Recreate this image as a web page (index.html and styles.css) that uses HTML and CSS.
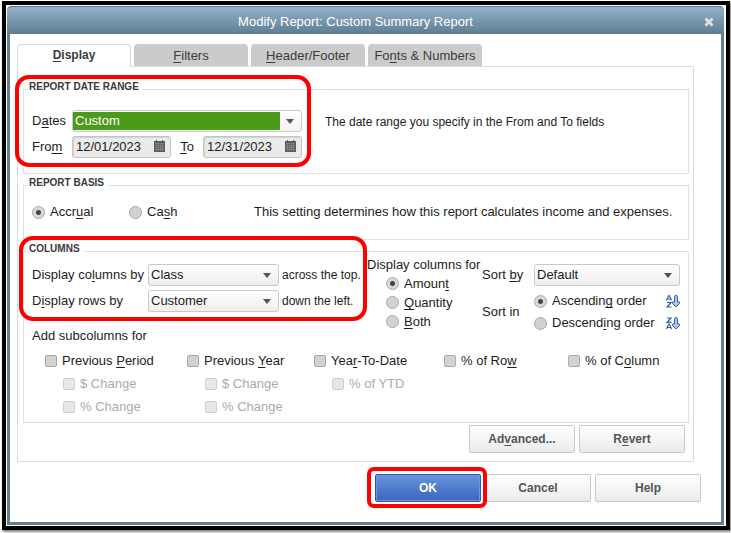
FILE: index.html
```html
<!DOCTYPE html>
<html lang="en">
<head>
<meta charset="UTF-8">
<meta name="viewport" content="width=device-width, initial-scale=1.0">
<title>Modify Report: Custom Summary Report</title>
<link rel="stylesheet" href="styles.css">
</head>
<body>
  <div class="frame">
    <div class="dialog">
      <div class="titlebar">
        <h1>Modify Report: Custom Summary Report</h1>
        <button class="close" aria-label="Close">
          <svg width="10" height="10" viewBox="0 0 10 10"><path d="M1.5 1.5l7 7M8.5 1.5l-7 7" stroke="#dfe1e3" stroke-width="2.8"/></svg>
        </button>
      </div>

      <form class="content">
        <div class="tabs">
          <button type="button" class="tab active"><u>D</u>isplay</button>
          <button type="button" class="tab"><u>F</u>ilters</button>
          <button type="button" class="tab"><u>H</u>eader/Footer</button>
          <button type="button" class="tab">Fo<u>n</u>ts &amp; Numbers</button>
        </div>

        <div class="panel">
          <fieldset class="date-range">
            <legend>REPORT DATE RANGE</legend>
            <div class="callout callout-dates"></div>
            <div class="split">
              <div class="dates">
                <label for="dates">D<u>a</u>tes</label>
                <div class="select select-focus">
                  <select id="dates"><option>Custom</option></select>
                </div>
                <label for="from">Fro<u>m</u></label>
                <div class="date-pair">
                  <div class="date">
                    <input type="text" id="from" value="12/01/2023">
                    <svg class="calendar" width="11" height="12" viewBox="0 0 11 12"><path d="M0 1h2V0h1v1h5V0h1v1h2v11H0z" fill="#5c5c5c"/><path d="M1 3.5h9M1 5.5h9M1 7.5h9M1 9.5h9M2.5 3v8M4.5 3v8M6.5 3v8M8.5 3v8" stroke="#8d8d8d" stroke-width=".6"/></svg>
                  </div>
                  <label for="to"><u>T</u>o</label>
                  <div class="date">
                    <input type="text" id="to" value="12/31/2023">
                    <svg class="calendar" width="11" height="12" viewBox="0 0 11 12"><path d="M0 1h2V0h1v1h5V0h1v1h2v11H0z" fill="#5c5c5c"/><path d="M1 3.5h9M1 5.5h9M1 7.5h9M1 9.5h9M2.5 3v8M4.5 3v8M6.5 3v8M8.5 3v8" stroke="#8d8d8d" stroke-width=".6"/></svg>
                  </div>
                </div>
              </div>
              <p class="hint">The date range you specify in the From and To fields</p>
            </div>
          </fieldset>

          <fieldset class="basis">
            <legend>REPORT BASIS</legend>
            <div class="basis-row">
              <label class="option"><input type="radio" name="basis" checked><span>Accr<u>u</u>al</span></label>
              <label class="option"><input type="radio" name="basis"><span>Ca<u>s</u>h</span></label>
              <p>This setting determines how this report calculates income and expenses.</p>
            </div>
          </fieldset>

          <fieldset class="columns">
            <legend>COLUMNS</legend>
            <div class="callout callout-columns"></div>
            <div class="columns-top">
              <div>
                <div class="display-by">
                  <label for="cols">Display co<u>l</u>umns by</label>
                  <div class="select"><select id="cols"><option>Class</option></select></div>
                  <span>across the top.</span>
                  <label for="rows">D<u>i</u>splay rows by</label>
                  <div class="select"><select id="rows"><option>Customer</option></select></div>
                  <span>down the left.</span>
                </div>
                <p class="subcolumns-title">Add subcolumns for</p>
              </div>

              <div class="columns-for">
                <p>Display columns for</p>
                <label class="option"><input type="radio" name="for" checked><span>Amoun<u>t</u></span></label>
                <label class="option"><input type="radio" name="for"><span><u>Q</u>uantity</span></label>
                <label class="option"><input type="radio" name="for"><span><u>B</u>oth</span></label>
              </div>

              <div class="sort">
                <label for="sort">Sort <u>b</u>y</label>
                <div class="select"><select id="sort"><option>Default</option></select></div>
                <span>Sort in</span>
                <div class="order">
                  <div class="order-row">
                    <label class="option"><input type="radio" name="order" checked><span>Ascendin<u>g</u> order</span></label>
                    <svg width="14" height="13" viewBox="0 0 14 13"><path d="M.5 5.500L2.500.8h1l2 4.700M1.300 4h3.400M1 7.500h4L1 12h4.500" fill="none" stroke="#3d5a9e" stroke-width="1.2"/><path d="M8.500 1.500q0-1 1.500-1t1.500 1V7h2v1.500L10 12 6.500 8.500V7h2z" fill="#a9c4ee" stroke="#3f62ad"/></svg>
                  </div>
                  <div class="order-row">
                    <label class="option"><input type="radio" name="order"><span>Descend<u>i</u>ng order</span></label>
                    <svg width="14" height="13" viewBox="0 0 14 13"><path d="M1 1h4L1 5.300h4.500M.5 12l2-4.700h1l2 4.700M1.300 10.500h3.400" fill="none" stroke="#3d5a9e" stroke-width="1.2"/><path d="M8.500 1.500q0-1 1.500-1t1.500 1V7h2v1.500L10 12 6.500 8.500V7h2z" fill="#a9c4ee" stroke="#3f62ad"/></svg>
                  </div>
                </div>
              </div>
            </div>

            <div class="checks">
              <div>
                <label class="option"><input type="checkbox"><span>Previous <u>P</u>eriod</span></label>
                <label class="option sub"><input type="checkbox" disabled><span>$ Change</span></label>
                <label class="option sub"><input type="checkbox" disabled><span>% Change</span></label>
              </div>
              <div>
                <label class="option"><input type="checkbox"><span>Previous <u>Y</u>ear</span></label>
                <label class="option sub"><input type="checkbox" disabled><span>$ Change</span></label>
                <label class="option sub"><input type="checkbox" disabled><span>% Change</span></label>
              </div>
              <div>
                <label class="option"><input type="checkbox"><span>Yea<u>r</u>-To-Date</span></label>
                <label class="option sub"><input type="checkbox" disabled><span>% of YTD</span></label>
              </div>
              <div>
                <label class="option"><input type="checkbox"><span>% of Ro<u>w</u></span></label>
              </div>
              <div>
                <label class="option"><input type="checkbox"><span>% of C<u>o</u>lumn</span></label>
              </div>
            </div>
          </fieldset>

          <div class="panel-buttons">
            <button type="button" class="btn">Ad<u>v</u>anced...</button>
            <button type="button" class="btn">R<u>e</u>vert</button>
          </div>
        </div>

        <div class="dialog-buttons">
          <div class="ok">
            <button type="button" class="btn btn-primary">OK</button>
            <div class="callout callout-ok"></div>
          </div>
          <button type="button" class="btn">Cancel</button>
          <button type="button" class="btn">Help</button>
        </div>
      </form>
    </div>
  </div>
</body>
</html>
```
FILE: styles.css
```css
* {
  box-sizing: border-box;
}
body {
  margin: 0;
  background: #fff;
  color: #1c1c1c;
  font-family: "Liberation Sans", Arial, sans-serif;
  font-size: 13px;
  line-height: 16px;
}
p, h1 {
  margin: 0;
}
button, input, select {
  font-family: inherit;
  font-size: 13px;
  color: inherit;
  margin: 0;
}
u {
  text-underline-offset: 2px;
  text-decoration-thickness: 1px;
  text-decoration-skip-ink: none;
}
.frame {
  margin: 1px 1px 3px 2px;
  border: 4px solid #000;
  padding: 1px 2px 1px 1px;
  background: #fff;
  box-shadow: 1px 2px 2px #888;
}
.dialog {
  border: 3px solid #637f92;
  border-top: 0;
  border-radius: 5px 5px 0 0;
  background: #637f92;
}
.titlebar {
  display: flex;
  align-items: center;
  height: 28px;
  margin: 0 -3px;
  padding: 0 10px;
  border-top: 1px solid #5b7789;
  border-radius: 5px 5px 0 0;
  background: linear-gradient(#93b1c8, #5f7d92);
}
.titlebar h1 {
  flex: 1;
  padding: 2px 10px 0 0;
  font-size: 13px;
  font-weight: normal;
  text-align: center;
  color: #fff;
}
.close {
  display: flex;
  padding: 2px 0 0;
  border: 0;
  background: none;
}
.content {
  padding: 10px 20px 20px 7px;
  background: #fff;
}

/* tabs */
.tabs {
  display: flex;
  gap: 3px;
}
.tab {
  width: 114px;
  height: 22px;
  padding: 0;
  border: 0;
  border-radius: 4px 4px 0 0;
  background: #cbcbcb;
  color: #3c3c3c;
}
.tab.active {
  position: relative;
  height: 23px;
  margin-bottom: -1px;
  padding-bottom: 2px;
  border: 1px solid #d9d9d9;
  border-bottom: 0;
  background: #fff;
  font-size: 12px;
  font-weight: bold;
}
.panel {
  margin-right: 7px;
  padding: 14px 4px 8px 5px;
  border: 1px solid #dcdcdc;
}

/* groups */
fieldset {
  position: relative;
  min-width: 0;
  margin: 0 0 3px;
  padding: 0 8px;
  border: 1px solid #e2e2e2;
}
legend {
  margin-left: -5px;
  padding: 0 4px 4px 2px;
  font-size: 10px;
  font-weight: bold;
  line-height: 12px;
  color: #3a3a3a;
}
.date-range {
  padding-top: 13px;
  padding-bottom: 15px;
}
.basis {
  padding-top: 11px;
  padding-bottom: 19px;
}
.columns {
  margin-bottom: 2px;
  padding-bottom: 4px;
}
.split {
  display: flex;
  gap: 23px;
}
.hint {
  font-size: 12px;
  line-height: 24px;
}
.dates {
  display: grid;
  grid-template-columns: 40px 230px;
  row-gap: 4px;
  align-items: center;
}
.date-pair {
  display: flex;
  align-items: center;
  justify-content: space-between;
}
.basis-row {
  display: flex;
}
.basis-row .option {
  width: 97px;
}
.basis-row p {
  margin-left: 28px;
}

/* fields */
.select {
  position: relative;
}
.select select {
  display: block;
  appearance: none;
  width: 100%;
  height: 22px;
  padding: 0 20px 2px 2px;
  border: 1px solid #c9c9c9;
  border-radius: 3px;
  background: linear-gradient(#fff, #eee);
}
.select::after {
  content: "";
  position: absolute;
  top: 9px;
  right: 8px;
  border: 4px solid transparent;
  border-top: 5px solid #555;
  border-bottom: 0;
  pointer-events: none;
}
.select-focus select {
  background: linear-gradient(#4c9a1a, #4c9a1a) 0 1px / calc(100% - 21px) 18px no-repeat, linear-gradient(#fff, #f3f3f3);
  color: #fff;
}
.select option {
  color: #1c1c1c;
}
.date {
  position: relative;
}
.date input {
  display: block;
  width: 99px;
  height: 22px;
  padding: 0 16px 1px 3px;
  border: 1px solid #c4c4c4;
  border-radius: 3px;
  background: #ebebeb;
  box-shadow: inset 1px 1px 1px #d2d2d2;
}
.calendar {
  position: absolute;
  top: 4px;
  right: 6px;
}
.option {
  display: flex;
  align-items: center;
  gap: 5px;
  white-space: nowrap;
}
input[type="radio"], input[type="checkbox"] {
  appearance: none;
  flex: none;
  width: 12px;
  height: 12px;
  border: 1px solid #a9a9a9;
  background: #d2d2d2;
}
input[type="radio"] {
  width: 13px;
  height: 13px;
  border-radius: 50%;
}
input[type="radio"]:checked {
  background: radial-gradient(circle, #444 2px, #d8d8d8 3px);
}
input[type="checkbox"] {
  border-radius: 2px;
}
input[type="checkbox"]:disabled {
  border-color: #cfcfcf;
  background: #e7e7e7;
}
input:disabled + span {
  color: #ababab;
}

/* columns */
.columns-top {
  display: grid;
  grid-template-columns: 335px 115px 1fr;
}
.display-by {
  display: grid;
  grid-template-columns: 113px 131px auto;
  gap: 4px 3px;
  align-items: center;
  padding-top: 5px;
  white-space: nowrap;
}
.display-by span {
  font-size: 12px;
}
.subcolumns-title {
  margin-top: 16px;
}
.columns-for p {
  margin-bottom: 3px;
  line-height: 12px;
}
.columns-for .option {
  height: 19px;
  padding-left: 19px;
}
.sort {
  display: grid;
  grid-template-columns: 52px 1fr;
  row-gap: 4px;
  align-items: center;
  align-content: start;
  padding-top: 5px;
}
.order-row {
  display: flex;
  align-items: center;
  justify-content: space-between;
  height: 22px;
}
.checks {
  display: grid;
  grid-template-columns: 142fr 127fr 130fr 124fr 112fr;
  margin-top: 5px;
  padding-left: 13px;
}
.checks .option {
  height: 23px;
}
.checks .sub {
  padding-left: 18px;
}

/* buttons */
.panel-buttons, .dialog-buttons {
  display: flex;
  justify-content: flex-end;
  gap: 4px;
}
.panel-buttons {
  padding-right: 4px;
}
.dialog-buttons {
  margin-top: 12px;
}
.btn {
  display: block;
  width: 106px;
  height: 28px;
  padding: 0;
  border: 1px solid #cacaca;
  border-radius: 2px;
  background: linear-gradient(#fff, #ebebeb);
  color: #555;
  font-size: 12px;
  font-weight: bold;
}
.btn-primary {
  border-color: #2f57a5;
  background: linear-gradient(#6795dc, #3b64c0);
  box-shadow: inset 0 0 0 1px #6f97dc;
  color: #fff;
}

/* red highlights */
.callout {
  position: absolute;
  z-index: 1;
  border: 4px solid #fe0000;
  border-radius: 14px;
  pointer-events: none;
}
.callout-dates {
  top: -22px;
  left: -9px;
  width: 296px;
  height: 92px;
}
.callout-columns {
  top: -23px;
  left: -5px;
  width: 348px;
  height: 85px;
}
.ok {
  position: relative;
}
.callout-ok {
  inset: -7px -6px -6px -8px;
  border-radius: 7px;
}
```
